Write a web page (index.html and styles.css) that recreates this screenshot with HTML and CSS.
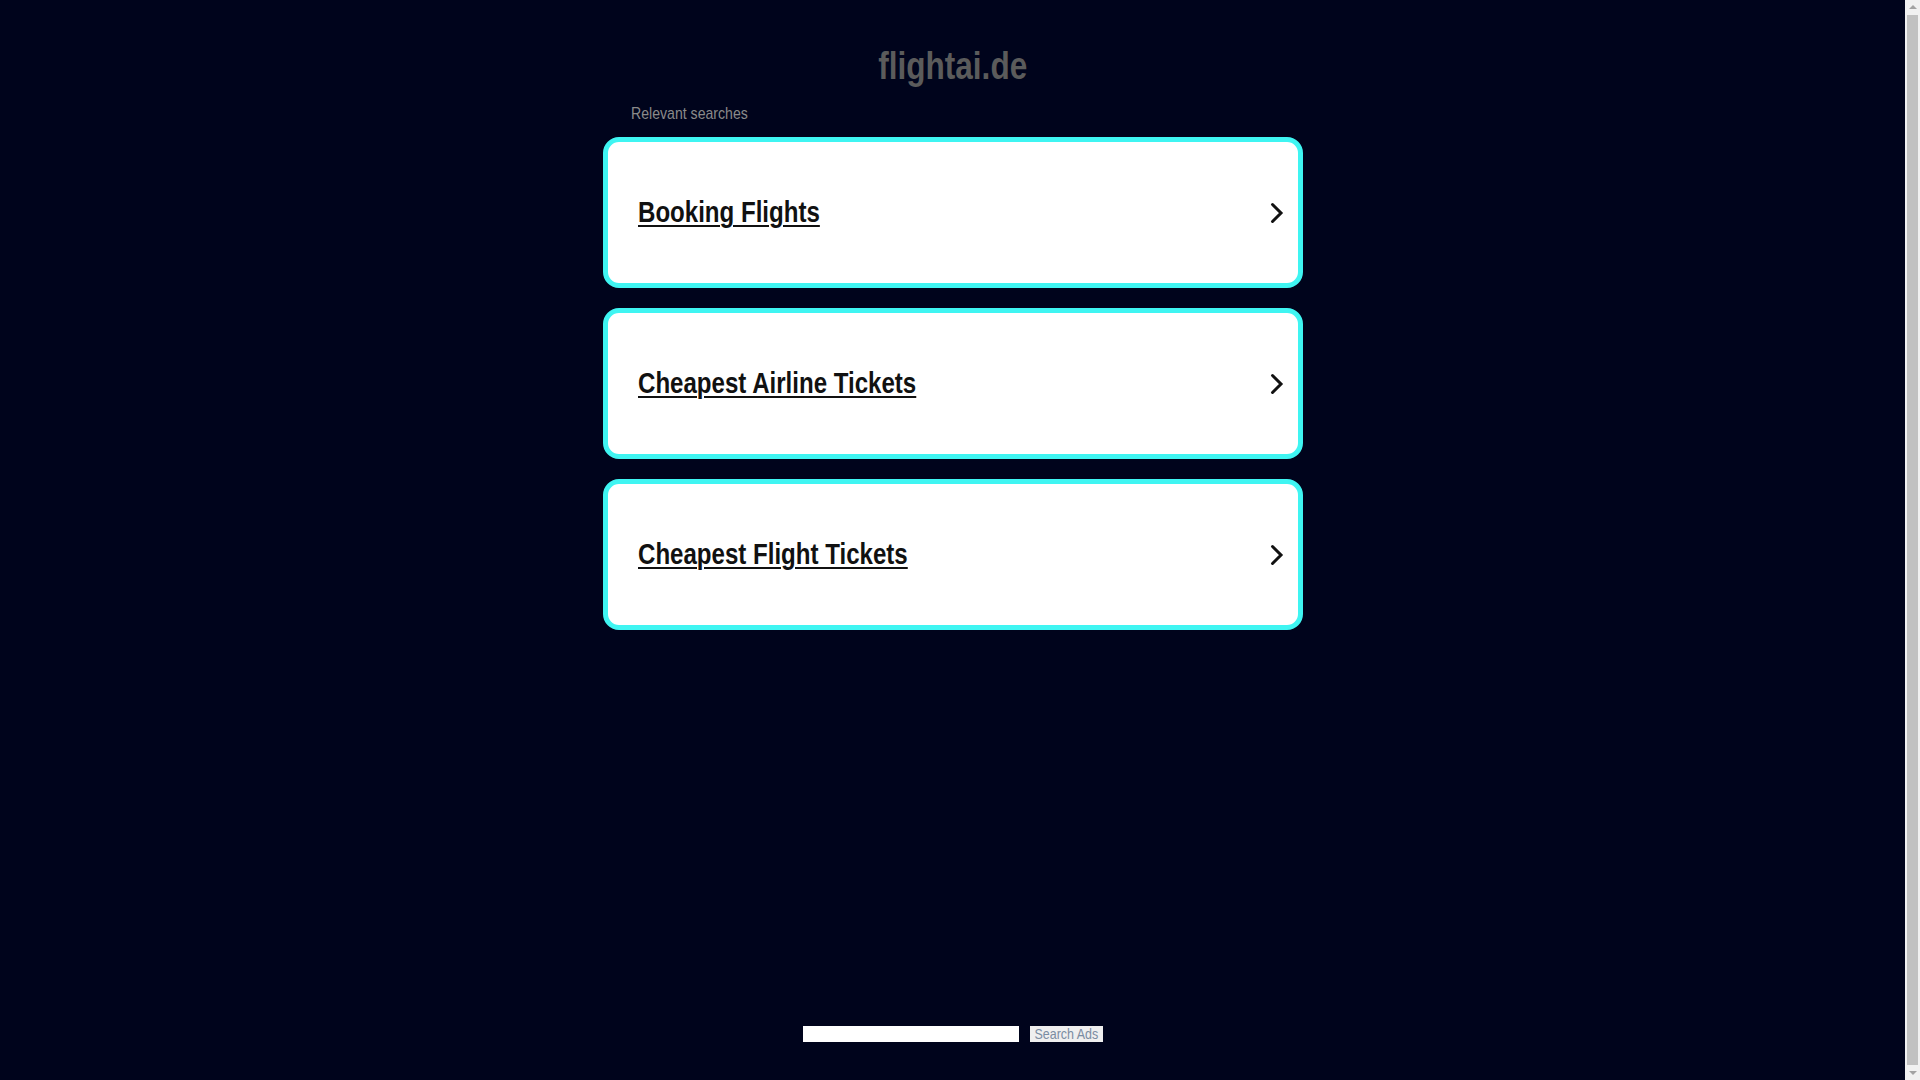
FILE: index.html
```html
<!DOCTYPE html>
<html lang="de">
<head>
<meta charset="utf-8">
<title>flightai.de</title>
<link rel="stylesheet" href="styles.css">
</head>
<body>
<div class="page">
  <h1 class="title"><span class="narrow narrow-c">flightai.de</span></h1>
  <div class="relevant"><span class="narrow">Relevant searches</span></div>
  <div class="cards">
    <a class="card" href="#">
      <span class="card-text narrow">Booking Flights</span>
      <svg class="chev" width="14" height="22" viewBox="0 0 14 22"><path d="M2.5 2.5 L11 11 L2.5 19.5" fill="none" stroke="#111" stroke-width="3" stroke-linecap="round" stroke-linejoin="miter"/></svg>
    </a>
    <a class="card" href="#">
      <span class="card-text narrow">Cheapest Airline Tickets</span>
      <svg class="chev" width="14" height="22" viewBox="0 0 14 22"><path d="M2.5 2.5 L11 11 L2.5 19.5" fill="none" stroke="#111" stroke-width="3" stroke-linecap="round" stroke-linejoin="miter"/></svg>
    </a>
    <a class="card" href="#">
      <span class="card-text narrow">Cheapest Flight Tickets</span>
      <svg class="chev" width="14" height="22" viewBox="0 0 14 22"><path d="M2.5 2.5 L11 11 L2.5 19.5" fill="none" stroke="#111" stroke-width="3" stroke-linecap="round" stroke-linejoin="miter"/></svg>
    </a>
  </div>
</div>
<form class="search">
  <input class="search-input" type="text">
  <button class="search-btn" type="button"><span class="narrow narrow-c">Search Ads</span></button>
</form>
<div class="scrollbar" aria-hidden="true">
  <div class="sb-up"></div>
  <div class="sb-thumb"></div>
  <div class="sb-down"></div>
</div>
</body>
</html>
```

FILE: styles.css
```css
body {
  margin: 0 15px 0 0;
  background: #00041c;
  font-family: "Liberation Sans", Arial, sans-serif;
  padding-bottom: 20px;
}
.narrow {
  display: inline-block;
  transform: scaleX(0.83);
  transform-origin: left center;
}
.narrow-c {
  transform-origin: center center;
}
.page {
  width: 700px;
  margin: 0 auto;
  padding-top: 43px;
}
.title {
  margin: 0;
  text-align: center;
  font-size: 38px;
  line-height: 46px;
  font-weight: bold;
  color: #5b5b5b;
}
.relevant {
  margin-top: 15px;
  padding-left: 28px;
  font-size: 17px;
  line-height: 20px;
  color: #8a8a8a;
}
.cards {
  margin-top: 13px;
  display: flex;
  flex-direction: column;
  gap: 20px;
}
.card {
  box-sizing: border-box;
  height: 151px;
  border: 5px solid #3ff5f2;
  border-radius: 16px;
  background: #ffffff;
  display: flex;
  align-items: center;
  justify-content: space-between;
  padding: 0 14px 0 30px;
  color: #111111;
  text-decoration: none;
}
.card-text {
  font-size: 29px;
  font-weight: bold;
  text-decoration: underline;
  text-decoration-thickness: 2px;
  text-underline-offset: 3px;
  color: #111111;
}
.chev {
  display: block;
}
.search {
  margin-top: 396px;
  display: flex;
  justify-content: center;
  gap: 11px;
}
.search-input {
  box-sizing: border-box;
  width: 216px;
  height: 16px;
  border: none;
  padding: 0;
  background: #ffffff;
}
.search-btn {
  box-sizing: border-box;
  width: 73px;
  height: 16px;
  border: none;
  padding: 0;
  background: #efefef;
  color: #7a8ca2;
  font-family: "Liberation Sans", Arial, sans-serif;
  font-size: 15px;
  line-height: 16px;
  white-space: nowrap;
  display: flex;
  justify-content: center;
  align-items: center;
}
.scrollbar {
  position: fixed;
  top: 0;
  right: 0;
  width: 15px;
  height: 100vh;
  background: #f1f1f1;
  display: flex;
  flex-direction: column;
  align-items: center;
}
.sb-up {
  margin-top: 5px;
  width: 0;
  height: 0;
  border-left: 4px solid transparent;
  border-right: 4px solid transparent;
  border-bottom: 4px solid #a3a3a3;
}
.sb-thumb {
  margin-top: 6px;
  width: 11px;
  flex: 1;
  background: #c1c1c1;
}
.sb-down {
  margin: 6px 0 5px;
  width: 0;
  height: 0;
  border-left: 4px solid transparent;
  border-right: 4px solid transparent;
  border-top: 4px solid #a3a3a3;
}
```
